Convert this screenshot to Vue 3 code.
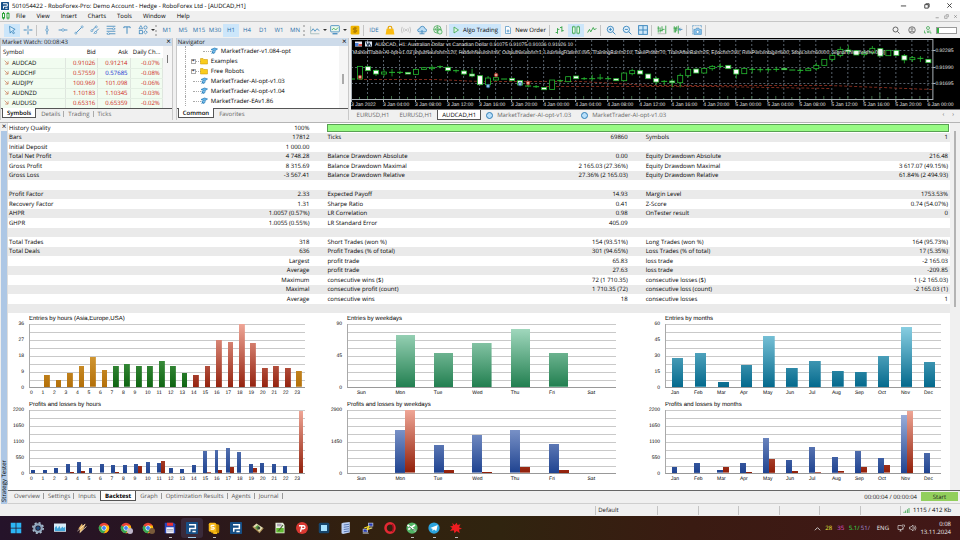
<script setup>
const b = '#3b86bd'
const g = '#3aa64c'
const svgIcons = {
  logo: '<rect width="16" height="16" rx="1" fill="#164f86"/><path d="M4 3.500h8.500v5H5V13M8.500 12.500h4.500" fill="none" stroke="#fff" stroke-width="2"/>',
  cursor: `<path d="M4 2l9 5-4 2 3 4-2 1-3-4-2 3z" fill="#d8ecfb" stroke="${b}" stroke-width="1.3"/>`,
  cross: `<path d="M8 1v5M8 10v5M1 8h5M10 8h5M7 8h2" stroke="${b}" stroke-width="1.5"/>`,
  vline: `<path d="M8 1v14" stroke="${b}" stroke-width="1.4"/><circle cx="8" cy="8" r="2" fill="#fff" stroke="${b}"/>`,
  hline: `<path d="M1 8h14" stroke="${b}" stroke-width="1.4"/><circle cx="8" cy="8" r="2" fill="#fff" stroke="${b}"/>`,
  trend: `<path d="M3 13L13 3" stroke="${b}" stroke-width="1.4"/><circle cx="3" cy="13" r="1.6" fill="#fff" stroke="${b}"/><circle cx="13" cy="3" r="1.6" fill="#fff" stroke="${b}"/>`,
  channel: `<path d="M2 10L10 2M6 14L14 6" stroke="${b}" stroke-width="1.4"/><circle cx="3" cy="9" r="1.6" fill="#fff" stroke="${b}"/><circle cx="10" cy="3" r="1.6" fill="#fff" stroke="${b}"/><circle cx="9" cy="12" r="1.6" fill="#fff" stroke="${b}"/>`,
  fib: `<path d="M1 2h14M1 6h14M1 10h14M1 14h14" stroke="${b}" stroke-width="1.3"/><circle cx="12" cy="6" r="1.6" fill="#fff" stroke="${b}"/><circle cx="4" cy="14" r="1.6" fill="#fff" stroke="${b}"/>`,
  text: `<path d="M3 5V3h10v2M8 3v11" fill="none" stroke="${b}" stroke-width="1.5"/>`,
  shapes: `<path d="M4.500 1l3 5h-6z" fill="none" stroke="${b}" stroke-width="1.2"/><circle cx="12" cy="4" r="2.500" fill="none" stroke="${b}" stroke-width="1.2"/><rect x="2" y="9" width="5" height="5" fill="none" stroke="${b}" stroke-width="1.2"/><path d="M12 9l3 2.500-3 2.500-3-2.500z" fill="none" stroke="${b}" stroke-width="1.2"/>`,
  lines: `<path d="M1 2v12h14" fill="none" stroke="#8aa" /><path d="M2 10l3-4 3 4 3-4 4 3" fill="none" stroke="${b}" stroke-width="1.3"/>`,
  indic: `<rect x="1" y="1" width="14" height="10" rx="1" fill="#e9f7ee" stroke="${b}" stroke-width="1.3"/><path d="M3 8l3-3 3 3 4-4" fill="none" stroke="${g}" stroke-width="1.3"/><path d="M4 14h8" stroke="${b}" stroke-width="2"/>`,
  dollar: '<rect x="1" y="1" width="14" height="14" rx="2" fill="#f0b400"/><path d="M11 5H7q-2 0-2 1.500T7 8h2q2 0 2 1.500T9 11H5M8 3v10" fill="none" stroke="#9a6a00" stroke-width="1.3"/>',
  lock: '<path d="M5 7V5q0-3 3-3t3 3v2" fill="none" stroke="#e3a100" stroke-width="1.800"/><path d="M2.500 6h11L15 15H1z" fill="#fbbc12"/>',
  signal: '<circle cx="8" cy="8" r="1.500" fill="#bbb"/><path d="M5 5q-2 3 0 6M2 3q-3 5 0 10M11 5q2 3 0 6M14 3q3 5 0 10" fill="none" stroke="#bdbdbd" stroke-width="1.3"/>',
  cloud: `<path d="M4 11q-3 0-3-2.500T4 6q1-4 4.500-4T13 6q2.500.5 2.500 2.500T13 11z" fill="#bcdcf3" stroke="${b}" stroke-width="1.3"/><path d="M8 8v6M4 14h8" stroke="${b}" stroke-width="1.4"/>`,
  globe: `<circle cx="7" cy="7" r="6" fill="none" stroke="${g}" stroke-width="1.2"/><circle cx="7" cy="7" r="3" fill="none" stroke="${g}"/><path d="M1 7h12M7 1v12" stroke="${g}"/><circle cx="11" cy="11" r="3.500" fill="#dff5e3" stroke="${g}" stroke-width="1.2"/>`,
  play: `<path d="M4 2l9 6-9 6z" fill="#dff5e3" stroke="${g}" stroke-width="1.600"/>`,
  order: `<path d="M3 1h7l3 3v11H3z" fill="#fff" stroke="${b}" stroke-width="1.3"/><path d="M5 10h6M8 7v6" stroke="${b}" stroke-width="1.500"/>`,
  bars: `<path d="M4 5v9M1 12h3M4 7h3M11 2v9M8 4h3M11 9h3" stroke="${g}" stroke-width="1.500"/>`,
  candles: `<rect x="2.500" y="3" width="4" height="10" fill="#e6f9e8" stroke="${g}" stroke-width="1.300"/><rect x="9.500" y="3" width="4" height="10" fill="#e6f9e8" stroke="${g}" stroke-width="1.300"/><path d="M4.500 1v2M4.500 13v2M11.500 1v2M11.500 13v2" stroke="${g}"/>`,
  zig: `<path d="M1 12l3-5 2 4 4-7 2 4 3-3" fill="none" stroke="${g}" stroke-width="1.500"/>`,
  zin: `<circle cx="7" cy="7" r="5" fill="#e4f2fc" stroke="${b}" stroke-width="1.500"/><path d="M11 11l4 4M4.500 7h5M7 4.500v5" stroke="${b}" stroke-width="1.500"/>`,
  zout: `<circle cx="7" cy="7" r="5" fill="#e4f2fc" stroke="${b}" stroke-width="1.500"/><path d="M11 11l4 4M4.500 7h5" stroke="${b}" stroke-width="1.500"/>`,
  tile: `<rect x="1" y="1" width="14" height="14" fill="#cfe7f8" stroke="${b}" stroke-width="1.500"/><path d="M8 1v14M1 8h14" stroke="${b}" stroke-width="1.500"/>`,
  shift: `<path d="M2 2v10M5 4v8M8 2v8M1 5h3M4 9h5M14 1v13M8 7h4" stroke="${g}" stroke-width="1.400"/><path d="M1 14h13" stroke="#999"/>`,
  scroll: `<path d="M2 2v10M4 4v8M6 2v8M1 5h6M8.500 1v13" stroke="${g}" stroke-width="1.400"/><path d="M15 7h-5M12 4.500L9.500 7l2.500 2.500" fill="none" stroke="${b}" stroke-width="1.400"/>`,
  camera: `<path d="M1 1h14M1 1v14M15 1v4" stroke="${b}" stroke-width="1" stroke-dasharray="2 1"/><path d="M3 7h3l1-2h4l1 2h3v8H3z" fill="#8cc4ec" stroke="${b}"/><circle cx="9" cy="11" r="2.500" fill="#fff" stroke="${b}"/>`,
  search: '<circle cx="7" cy="7" r="5" fill="none" stroke="#444" stroke-width="1.600"/><path d="M11 11l4 4" stroke="#444" stroke-width="1.600"/>',
  person: '<circle cx="8" cy="8" r="6.500" fill="none" stroke="#555" stroke-width="1.600"/><circle cx="8" cy="6" r="2.200" fill="none" stroke="#555" stroke-width="1.200"/><path d="M4 12q4-4 8 0" fill="none" stroke="#555" stroke-width="1.500"/>',
  gem: `<circle cx="8" cy="4" r="3" fill="none" stroke="${g}" stroke-width="1.500"/><path d="M1 9v5h3M6 9l2 5 2-5M12 9v5h3" fill="none" stroke="${g}" stroke-width="1.400"/>`,
  expert: '<path d="M2 5l7-3 6 2-6 4zM4 8q-1 4 4 5l3-4" fill="#63b5ea" stroke="#1e73ad" stroke-width="1.300"/><path d="M3 14l3-4" stroke="#1e73ad" stroke-width="1.300"/>',
  folder: '<path d="M1 3h5l2 2h7v9H1z" fill="#f9cb1d" stroke="#c79300"/>',
  // taskbar
  win: '<path d="M1 1h6.500v6.500H1zM8.500 1H15v6.500H8.500zM1 8.500h6.500V15H1zM8.500 8.500H15V15H8.500z" fill="#2cb5f5"/>',
  gear: '<circle cx="8" cy="8" r="5" fill="none" stroke="#8fa6bd" stroke-width="3"/><circle cx="8" cy="8" r="7" fill="none" stroke="#a9bccd" stroke-width="2" stroke-dasharray="2.750 2.750"/><circle cx="8" cy="8" r="2.500" fill="#1d4d80"/>',
  monitor: '<rect y="2" width="16" height="11" fill="#d9edf9"/><path d="M1 12V8l2-3 2 4 2-4 2 4 2-3 2 2 2-2v6z" fill="#41a5d9"/>',
  bolt: '<path d="M3 9l5-7 1 3 4-3-3 7-5 6V9z" fill="#e6b568"/><path d="M2 12l10-9M5 14l9-8" stroke="#fff0cd"/>',
  chrome: '<circle cx="8" cy="8" r="7" fill="#e84335"/><path d="M8 8L1.900 4.500A7 7 0 0 0 8 15l3-5.200z" fill="#34a853"/><path d="M8 15A7 7 0 0 0 14 4.600H8v3.400l3 2z" fill="#fbbc05"/><circle cx="8" cy="8" r="3.400" fill="#fff"/><circle cx="8" cy="8" r="2.600" fill="#4285f4"/>',
  save: '<path d="M1 1h12l2 2v12H1z" fill="#2944b8"/><rect x="4" y="1" width="8" height="4" fill="#e33"/><rect x="3" y="7" width="10" height="8" fill="#f3f3ff"/><path d="M4 10h8M4 12h8" stroke="#99a"/>',
  yellow: '<rect x="4" y="3" width="11" height="12" rx="2" fill="#c58c00"/><rect x="1" y="1" width="10" height="12" rx="2" fill="#f8ba18"/><path d="M8.500 4.500H5q-1 0-1 1.200T5 7h2q1.300 0 1.300 1.300T7 9.500H3.500" fill="none" stroke="#fff" stroke-width="1.400"/><path d="M7 13h5v3H7z" fill="#f8ba18"/>',
  roll: '<path d="M1 6l5-4 9 6-5 6z" fill="#e4dcb2"/><path d="M4 7l4-3 3 4-4 3z" fill="#599e42"/><path d="M1 6l9 8 5-6" fill="none" stroke="#a88b52" stroke-width="1.500"/><circle cx="9" cy="8" r="2" fill="#394837"/>',
  notepad: '<path d="M2 1h10l2 3v11H2z" fill="#e9f4df"/><path d="M3 8h10v6H3z" fill="#62b932"/><path d="M4 3h6M4 5h6" stroke="#869"/><path d="M6 12l6-8" stroke="#435b2d" stroke-width="1.500"/>',
  pcircle: '<circle cx="8" cy="8" r="8" fill="#d93831"/><path d="M4 5h6q2 0 2 2t-2 2H7M8 5L6 13" fill="none" stroke="#fff" stroke-width="1.700"/>',
  square: '<rect x="1" y="1" width="14" height="14" rx="2" fill="#17456c"/><rect x="4" y="4" width="8" height="8" fill="#a7e2ff"/>',
  server: '<path d="M4 1l9-1v14l-9 2-2-1V2z" fill="#bdd1f4"/><path d="M5 4l7-1M5 7l7-1M5 10l7-1M5 13l7-1" stroke="#5876b0" stroke-width="1.300"/>',
  putty: '<rect x="8" y="1" width="7" height="5" fill="#b9c4d4"/><rect x="9" y="2" width="5" height="3" fill="#2537b5"/><rect x="1" y="9" width="7" height="5" fill="#b9c4d4"/><rect x="2" y="10" width="5" height="3" fill="#2537b5"/><path d="M3 8l6-2-2 4 6-2" fill="none" stroke="#ffe62e" stroke-width="1.500"/><path d="M9 8h5M1 15h8" stroke="#b9c4d4"/>',
  opera: '<ellipse cx="8" cy="8" rx="6" ry="6.300" fill="none" stroke="#e42933" stroke-width="3.400"/><path d="M11 3q3 5 0 10" fill="none" stroke="#a50f20" stroke-width="2"/>',
  greenball: '<circle cx="8" cy="8" r="7.500" fill="#52b565"/><path d="M2 4l11 8M3 10l9-6" stroke="#fff" stroke-width="2.200"/><path d="M4 6q5 6 9 5" stroke="#174f2d" fill="none" stroke-width="1.200"/>',
  telegram: '<circle cx="8" cy="8" r="7.500" fill="#2ba4df"/><path d="M3 8l10-4-2 8-3-2-2 2v-3z" fill="#fff"/>',
  splat: '<path d="M3 1l3 3 3-3 1 3 4-1-2 4 4 2-4 1 1 5-4-3-3 3-1-4-5 1 3-4-3-2 4-1z" fill="#ee1c20"/>',
  net: '<path d="M9 3H2v8h9V8M5 14h4M7 11v3" fill="none" stroke="#ddd" stroke-width="1.300"/><path d="M10 2h5v3q-2.500 3-5 0zM12.500 7v4" fill="none" stroke="#ddd" stroke-width="1.200"/>',
  sound: '<path d="M1 6h3l4-4v12l-4-4H1zM10 5q2 3 0 6M12 3q4 5 0 10" fill="none" stroke="#ddd" stroke-width="1.300"/>'
}
const menus = ['File', 'View', 'Insert', 'Charts', 'Tools', 'Window', 'Help']
const I = (icon, label, on) => ({ t: 'i', icon, label, on })
const S = { t: 's' }
const G = { t: 'g' }
const C = { t: 'c' }
const tools = [
  I('cursor', 'Cursor', true), I('cross', 'Crosshair'), S, I('vline', 'Vertical line'), I('hline', 'Horizontal line'),
  I('trend', 'Trendline'), I('channel', 'Channel'), I('fib', 'Fibonacci'), I('text', 'Text'), I('shapes', 'Shapes'), C, G,
  ...['M1', 'M5', 'M15', 'M30', 'H1', 'H4', 'D1', 'W1', 'MN'].map(x => ({ t: 'x', text: x, on: x === 'H1' })),
  G, I('lines', 'Chart type'), C, I('indic', 'Indicators'), C, I('dollar', 'Symbols'), S, { t: 'x', text: 'IDE' },
  I('lock', 'Market'), I('signal', 'Signals'), I('cloud', 'VPS'), I('globe', 'Community'), S,
  { t: 'w', icon: 'play', text: 'Algo Trading', on: true }, { t: 'w', icon: 'order', text: 'New Order' }, S,
  I('bars', 'Bar chart'), I('candles', 'Candlesticks', true), I('zig', 'Line chart'), S,
  I('zin', 'Zoom in'), I('zout', 'Zoom out'), I('tile', 'Tile windows'), S, I('shift', 'Chart shift'), I('scroll', 'Auto scroll'), S, I('camera', 'Screenshot'), S
]
const quotes = [
  ['AUDCAD', '0.91026', '0.91214', '-0.07%'],
  ['AUDCHF', '0.57559', '0.57685', '-0.08%', true],
  ['AUDJPY', '100.969', '101.098', '-0.06%'],
  ['AUDNZD', '1.10183', '1.10345', '-0.03%'],
  ['AUDUSD', '0.65316', '0.65359', '-0.02%']
]
const nav = [
  { n: 'MarketTrader-v1.084-opt', icon: 'expert', deep: true },
  { n: 'Examples', icon: 'folder', plus: true },
  { n: 'Free Robots', icon: 'folder', plus: true },
  { n: 'MarketTrader-AI-opt-v1.03', icon: 'expert' },
  { n: 'MarketTrader-AI-opt-v1.04', icon: 'expert' },
  { n: 'MarketTrader-EAv1.86', icon: 'expert' }
]
// [kind, body top, body bottom, wick top, wick bottom] in thirds of a pixel
const raw = [
  'd 237', 'h 199 237', 'f 200 212', 'f 211 222 208 228', 'h 216 222 208 230', 'd 217 207 229', 'd 217 212 222', 'f 217 222',
  'h 208 223', 'h 203 208', 'h 202 206 196 212', 'd 200 196 205', 'f 202 211 198 216', 'd 212 208 218', 'f 213 222 209 226', 'f 222 228 206 232',
  'f 227 254', 'h 234 254 228 262', 'h 233 240', 'd 237', 'f 235 241', 'f 242 255', 'd 258 246 262', 'd 260 255 264', 'f 262 269', 'h 240 268',
  'd 242 238 248', 'h 230 245', 'f 228 236', 'd 236 231 240', 'd 236 224 242', 'd 234 222 240', 'd 236 229 240', 'f 236 242', 'h 219 242', 'h 212 221 206 226', 'f 212 222',
  'f 222 236', 'f 235 246 230 254', 'd 244 240 256', 'f 243 248 236 262', 'h 226 248 220 262', 'h 208 227 200 232', 'f 207 219', 'h 205 219',
  'h 199 206 195 212', 'd 199 190 204', 'f 196 206', 'f 208 222 208 236', 'h 205 221', 'd 208 203 220', 'd 209 203 217', 'd 209 203 217', 'd 208 200 215',
  'f 205 209', 'd 210', 'd 211 205 218', 'h 206 212', 'h 196 206 188 212', 'h 178 196', 'h 166 178 160 184', 'h 148 166 140 172', 'f 150 154 136 164',
  'f 152 165', 'h 158 164 150 170', 'h 145 158 138 164', 'f 146 168', 'h 151 167', 'f 151 166', 'f 167 180 162 190', 'h 173 179 168 186', 'd 175 168 186', 'f 178 188'
]
const candles = raw.map((s, i) => {
  const [k, ...v] = s.split(' ')
  const n = v.map(Number)
  const x = 1 + i * 8
  if (k === 'd') return { k, x, y: n[0] / 3, h: 0, a: (n[1] ?? n[0]) / 3, z: (n[2] ?? n[0]) / 3 }
  return { k, x, y: n[0] / 3, h: (n[1] - n[0]) / 3, a: (n[2] ?? n[0]) / 3, z: (n[3] ?? n[1]) / 3 }
})
const hrs = ['00:00', '04:00', '08:00', '12:00', '16:00', '20:00']
const times = Array.from({ length: 19 }, (_, k) => k === 0 ? '3 Jan 2022' : `${3 + Math.floor(k / 6)} Jan ${hrs[k % 6]}`)
const deals = [[9, 77, 'r'], [137, 86, 'b'], [145, 75, 'r'], [169, 84, 'b'], [177, 83, 'r']]

const e = ''
const stats = [
  ['Bars', '17812', 'Ticks', '69860', 'Symbols', '1'],
  ['Initial Deposit', '1 000.00', e, e, e, e],
  ['Total Net Profit', '4 748.28', 'Balance Drawdown Absolute', '0.00', 'Equity Drawdown Absolute', '216.48'],
  ['Gross Profit', '8 315.69', 'Balance Drawdown Maximal', '2 165.03 (27.36%)', 'Equity Drawdown Maximal', '3 617.07 (49.15%)'],
  ['Gross Loss', '-3 567.41', 'Balance Drawdown Relative', '27.36% (2 165.03)', 'Equity Drawdown Relative', '61.84% (2 494.93)'],
  [e, e, e, e, e, e],
  ['Profit Factor', '2.33', 'Expected Payoff', '14.93', 'Margin Level', '1753.53%'],
  ['Recovery Factor', '1.31', 'Sharpe Ratio', '0.41', 'Z-Score', '0.74 (54.07%)'],
  ['AHPR', '1.0057 (0.57%)', 'LR Correlation', '0.98', 'OnTester result', '0'],
  ['GHPR', '1.0055 (0.55%)', 'LR Standard Error', '405.09', e, e],
  [e, e, e, e, e, e],
  ['Total Trades', '318', 'Short Trades (won %)', '154 (93.51%)', 'Long Trades (won %)', '164 (95.73%)'],
  ['Total Deals', '636', 'Profit Trades (% of total)', '301 (94.65%)', 'Loss Trades (% of total)', '17 (5.35%)'],
  [e, 'Largest', 'profit trade', '65.83', 'loss trade', '-2 165.03'],
  [e, 'Average', 'profit trade', '27.63', 'loss trade', '-209.85'],
  [e, 'Maximum', 'consecutive wins ($)', '72 (1 710.35)', 'consecutive losses ($)', '1 (-2 165.03)'],
  [e, 'Maximal', 'consecutive profit (count)', '1 710.35 (72)', 'consecutive loss (count)', '-2 165.03 (1)'],
  [e, 'Average', 'consecutive wins', '18', 'consecutive losses', '1'],
  [e, e, e, e, e, e]
]
const hours = Array.from({ length: 24 }, (_, i) => String(i))
const days = ['Sun', 'Mon', 'Tue', 'Wed', 'Thu', 'Fri', 'Sat']
const months = ['Jan', 'Feb', 'Mar', 'Apr', 'May', 'Jun', 'Jul', 'Aug', 'Sep', 'Oct', 'Nov', 'Dec']
const session = i => i < 7 || i === 23 ? 'asia' : i < 14 ? 'europe' : 'usa'
const one = (labels, vals, tone) => labels.map((l, i) => ({ l, bars: [{ v: vals[i], c: typeof tone === 'string' ? tone : tone(i) }] }))
const two = (labels, p, q) => labels.map((l, i) => ({ l, bars: [{ v: p[i], c: 'gain' }, { v: q[i], c: 'loss' }] }))
const charts = [
  { title: 'Entries by hours (Asia,Europe,USA)', max: 36, ticks: [36, 27, 18, 9, 0], kind: 'hours',
    cols: one(hours, [0, 7, 4, 8, 12, 17, 10, 12, 13, 12, 12, 15, 12, 8, 7, 12, 27, 26, 36, 25, 11, 12, 11, 9], session) },
  { title: 'Entries by weekdays', max: 90, ticks: [90, 45, 0], kind: 'days', cols: one(days, [0, 75, 49, 63, 83, 48, 0], 'day') },
  { title: 'Entries by months', max: 60, ticks: [60, 45, 30, 15, 0], kind: 'months', cols: one(months, [28, 32, 5, 21, 49, 18, 25, 15, 14, 30, 57, 24], 'month') },
  { title: 'Profits and losses by hours', max: 2200, ticks: [2200, 1650, 1100, 550, 0], kind: 'hours pair',
    cols: two(hours, [115, 104, 173, 310, 390, 173, 300, 276, 288, 320, 400, 333, 173, 150, 265, 770, 795, 860, 725, 310, 345, 310, 253, 0],
      [0, 0, 0, 35, 70, 0, 0, 35, 0, 253, 0, 437, 0, 0, 0, 25, 105, 215, 0, 160, 0, 0, 0, 2165]) },
  { title: 'Profits and losses by weekdays', max: 2900, ticks: [2900, 1450, 0], kind: 'days', cols: two(days, [0, 1975, 1275, 1730, 1960, 1335, 0], [0, 2880, 155, 60, 260, 150, 0]) },
  { title: 'Profits and losses by months', max: 2200, ticks: [2200, 1650, 1100, 550, 0], kind: 'months',
    cols: two(months, [220, 345, 92, 357, 1230, 460, 900, 552, 770, 540, 2025, 715], [0, 0, 195, 35, 483, 70, 25, 60, 195, 265, 2165, 10]) }
]
const testerTabs = ['Overview', 'Settings', 'Inputs', 'Backtest', 'Graph', 'Optimization Results', 'Agents', 'Journal']
const apps = ['win', 'gear', 'monitor', 'bolt', 'chrome', 'chrome', 'chrome', 'save', 'logo', 'yellow', 'logo', 'roll', 'notepad', 'pcircle', 'square', 'server', 'putty', 'opera', 'greenball', 'telegram', 'splat']
const running = [7, 9, 18, 19, 20]
</script>

<template>
  <div class="app">
    <header class="titlebar">
      <svg class="ic8" viewBox="0 0 16 16" v-html="svgIcons.logo" />
      <span class="title">501054422 - RoboForex-Pro: Demo Account - Hedge - RoboForex Ltd - [AUDCAD,H1]</span>
      <div class="winbtns">
        <button aria-label="Minimize"><svg viewBox="0 0 8 8"><path d="M1 4.500h6" stroke="#333" /></svg></button>
        <button aria-label="Restore"><svg viewBox="0 0 8 8"><path d="M2 3h4v4H2zM3 2h4v4" fill="none" stroke="#333" /></svg></button>
        <button aria-label="Close"><svg viewBox="0 0 8 8"><path d="M1.500 1.500l5 5M6.500 1.500l-5 5" stroke="#333" /></svg></button>
      </div>
    </header>

    <nav class="menubar">
      <svg class="ic8" viewBox="0 0 16 16"><rect x="1" y="3" width="4" height="9" fill="#fff" stroke="#31a53d" stroke-width="2" /><rect x="10" y="3" width="4" height="9" fill="#fff" stroke="#31a53d" stroke-width="2" /><path d="M3 0v3M3 12v3M12 0v3M12 12v3" stroke="#31a53d" stroke-width="2" /></svg>
      <button v-for="m in menus" :key="m">{{ m }}</button>
      <div class="mdibtns">
        <svg viewBox="0 0 8 8"><path d="M1 6h5" stroke="#777" /></svg>
        <svg viewBox="0 0 8 8"><path d="M1 3h4v4H1zM3 1h4v4" fill="none" stroke="#888" /></svg>
        <svg viewBox="0 0 8 8"><path d="M2 2l4 4M6 2l-4 4" stroke="#777" /></svg>
      </div>
    </nav>

    <div class="toolbar">
      <template v-for="(t, i) in tools" :key="i">
        <i v-if="t.t === 's'" class="sep" />
        <i v-else-if="t.t === 'g'" class="grip" />
        <i v-else-if="t.t === 'c'" class="caret" />
        <button v-else-if="t.t === 'i'" class="tool" :class="{ on: t.on }" :aria-label="t.label"><svg viewBox="0 0 16 16" v-html="svgIcons[t.icon]" /></button>
        <button v-else-if="t.t === 'x'" class="tool tf" :class="{ on: t.on }">{{ t.text }}</button>
        <button v-else class="wide" :class="{ on: t.on }"><svg viewBox="0 0 16 16" v-html="svgIcons[t.icon]" />{{ t.text }}</button>
      </template>
      <div class="right-tools">
        <button class="tool" aria-label="Search"><svg viewBox="0 0 16 16" v-html="svgIcons.search" /></button>
        <button class="tool" aria-label="Account"><svg viewBox="0 0 16 16" v-html="svgIcons.person" /></button>
        <button class="tool" aria-label="Level"><svg viewBox="0 0 16 16" v-html="svgIcons.gem" /></button>
        <span class="level"><i /></span>
      </div>
    </div>

    <div class="dock">
      <section class="panel market">
        <div class="ptitle"><span>Market Watch: 00:08:43</span><button aria-label="Close Market Watch">×</button></div>
        <div class="pbody">
          <table>
            <thead><tr><th>Symbol</th><th>Bid</th><th>Ask</th><th>Daily Ch...</th></tr></thead>
            <tbody>
              <tr v-for="q in quotes" :key="q[0]">
                <td><svg viewBox="0 0 8 8"><path d="M1 1l5 5M6.500 2v4.500H2" fill="none" stroke="#c4673d" /></svg>{{ q[0] }}</td>
                <td>{{ q[1] }}</td><td :class="{ up: q[4] }">{{ q[2] }}</td><td>{{ q[3] }}</td>
              </tr>
            </tbody>
          </table>
          <div class="vscroll"><i class="short" /></div>
        </div>
        <div class="ptabs"><button class="cur">Symbols</button><button>Details</button><button>Trading</button><button>Ticks</button></div>
      </section>

      <section class="panel navigator">
        <div class="ptitle"><span>Navigator</span><button aria-label="Close Navigator">×</button></div>
        <div class="pbody">
          <ul>
            <li v-for="n in nav" :key="n.n" :class="{ deep: n.deep }">
              <span class="branch"><b v-if="n.plus">+</b></span>
              <svg viewBox="0 0 16 16" v-html="svgIcons[n.icon]" />{{ n.n }}
            </li>
          </ul>
          <div class="vscroll mid"><i /></div>
        </div>
        <div class="ptabs"><button class="cur">Common</button><button>Favorites</button></div>
      </section>

      <section class="chartwin">
        <svg class="price" viewBox="0 0 609 71" preserveAspectRatio="xMinYMin meet">
          <g transform="translate(0 -38)">
            <g stroke="#56606a" stroke-width="1" stroke-dasharray="2 2" fill="none">
              <path d="M0 50.500H581M0 67.500H581M0 83.500H581" />
              <path v-for="k in 36" :key="k" :d="`M${k * 16 + .5} 40V99`" />
            </g>
            <path d="M8 79.500H85L130 81.500 H230L300 85.500H480L581 89.500M195 86.500H360L480 88.500" fill="none" stroke="#7c2b1e" stroke-dasharray="3 2" />
            <path v-for="k in 72" :key="'v' + k" :d="`M${k * 8 + .5} 99v${-1 - (k * 7 % 3) - (k === 66 ? 5 : 0)}`" stroke="#3f6b45" />
            <g v-for="(c, i) in candles" :key="'c' + i" stroke="#25bb30" stroke-width=".8">
              <path :d="`M${c.x} ${c.a}V${c.z}`" />
              <path v-if="c.k === 'd'" :d="`M${c.x - 3} ${c.y}h6`" stroke-width="1" />
              <rect v-else :x="c.x - 2.5" :y="c.y" width="5" :height="c.h" :fill="c.k === 'h' ? '#000' : '#fff'" />
            </g>
            <circle v-for="d in deals" :key="d[0]" :cx="d[0]" :cy="d[1]" r="1.800" :fill="d[2] === 'r' ? '#e4a79b' : '#8fbde0'" :stroke="d[2] === 'r' ? '#b3301e' : '#2b6796'" stroke-width=".8" />
            <path d="M.5 99V39.500H581.500V99.500H0" fill="none" stroke="#a9b0b6" />
            <path v-for="k in 19" :key="'t' + k" :d="`M${k * 32 - 31.5} 99v3`" stroke="#a9b0b6" />
            <path d="M581 50.500h3M581 67.500h3M581 83.500h3" stroke="#a9b0b6" />
            <g class="plabels">
              <text v-for="(t, k) in times" :key="t" :x="k * 32" y="105.500">{{ t }}</text>
              <text x="584" y="52">0.92285</text><text x="584" y="69">0.91990</text><text x="584" y="85">0.91695</text>
              <text x="24" y="46">AUDCAD, H1:  Australian Dollar vs Canadian Dollar  0.91075 0.91075 0.91026 0.91026  10</text>
              <text x="2" y="54">MarketTrader-AI-opt-v1.03 [InputNeurons=120; HiddenNeurons=9; OutputNeurons=1; LearningRate=0.095; TrainingBars=210; TakeProfit=70; TrainAfterBars=25; Epochs=200; RiskPercentage=600; StopLoss=60000; SignalThreshold=0.000]</text>
            </g>
            <rect x="4" y="41.500" width="7" height="5" fill="#e7e7f0" /><path d="M4 43h3.500v3H4z" fill="#4b7fd6" /><path d="M7.500 44H11v2H7.500z" fill="#d4564e" />
            <rect x="14" y="41.500" width="7" height="5" fill="#dce7f5" /><path d="M15 42l2 4 1-3 2 3" stroke="#24384f" fill="none" />
          </g>
        </svg>
        <div class="charttabs">
          <button>EURUSD,H1</button><button>EURUSD,H1</button><button class="cur">AUDCAD,H1</button>
          <button class="ea"><i />MarketTrader-AI-opt-v1.03</button><button class="ea"><i />MarketTrader-AI-opt-v1.03</button>
          <span class="arrows"><span>‹</span><span>›</span></span>
        </div>
      </section>
    </div>

    <section class="tester">
      <div class="spine"><button aria-label="Close tester">×</button><span>Strategy Tester</span></div>
      <div class="tmain">
        <div class="report">
          <div class="rcontent">
            <table class="stats">
              <colgroup><col class="w16"><col class="w16"><col class="w17"><col class="w17"><col class="w17"><col></colgroup>
              <tbody>
                <tr><td>History Quality</td><td>100%</td><td colspan="4" class="quality"><div /></td></tr>
                <tr v-for="(r, i) in stats" :key="i"><td v-for="(c, j) in r" :key="j">{{ c }}</td></tr>
              </tbody>
            </table>
            <div class="charts">
              <figure v-for="c in charts" :key="c.title" :class="c.kind">
                <figcaption>{{ c.title }}</figcaption>
                <div class="plotrow">
                  <div class="yaxis"><span v-for="t in c.ticks" :key="t">{{ t }}</span></div>
                  <div class="plot">
                    <div v-for="(col, i) in c.cols" :key="i" class="col">
                      <template v-for="(x, j) in col.bars" :key="j"><i :class="x.c" :style="{ height: x.v / c.max * 100 + '%' }" /></template>
                    </div>
                  </div>
                </div>
                <div class="xaxis"><span v-for="col in c.cols" :key="col.l">{{ col.l }}</span></div>
              </figure>
            </div>
          </div>
          <div class="rscroll"><i /></div>
        </div>
        <div class="ttabs">
          <button v-for="t in testerTabs" :key="t" :class="{ cur: t === 'Backtest' }">{{ t }}</button>
          <span class="clock">00:00:04 / 00:00:04</span>
          <button class="start">Start</button>
        </div>
      </div>
    </section>

    <footer class="status">
      <span class="profile">Default</span>
      <span /><span /><span /><span /><span /><span />
      <span class="conn"><svg viewBox="0 0 16 12"><path d="M1 12V9h2v3zM5 12V6h2v6zM9 12V3h2v9zM13 12V0h2v12z" fill="#35a34a" /></svg>1115 / 412 Kb</span>
    </footer>

    <div class="taskbar">
      <button v-for="(a, i) in apps" :key="i" :aria-label="a" :class="{ active: i === 8, running: running.includes(i) }">
        <svg viewBox="0 0 16 16" v-html="svgIcons[a]" />
        <em v-if="i === 5 || i === 6" :class="{ dark: i === 6 }" />
      </button>
      <div class="tray">
        <svg viewBox="0 0 8 8"><path d="M1 6l3-3 3 3" fill="none" stroke="#ddd" /></svg>
        <b class="y">28</b><b class="m">35</b><b class="gr">5.1/</b><b class="p">51/</b>
        <span class="lang">ENG</span>
        <svg class="net" viewBox="0 0 16 16" v-html="svgIcons.net" /><svg class="net" viewBox="0 0 16 16" v-html="svgIcons.sound" />
        <span class="date"><span>0:08</span><span>13.11.2024</span></span>
      </div>
    </div>
  </div>
</template>

<style>
body { margin: 0; background: #f0f0f0; }
</style>

<style scoped>
* { box-sizing: border-box; }
.app { min-height: 100vh; display: flex; flex-direction: column; background: #f0f0f0; color: #000; font: 6px/8px "Open Sans", "Noto Sans", sans-serif; text-rendering: geometricPrecision; overflow: hidden; }
button { font: inherit; color: inherit; background: none; border: 0; padding: 0; margin: 0; white-space: nowrap; text-rendering: inherit; }
i, em { font-style: normal; }
svg { display: block; flex: none; }
.ic8 { width: 8px; height: 8px; }

.titlebar { display: flex; align-items: center; height: 11px; background: #fff; padding: 0 4px 0 1px; gap: 3px; }
.winbtns { margin-left: auto; display: flex; gap: 15px; padding-right: 2px; }
.winbtns svg { width: 7px; height: 7px; }
.winbtns button { width: 8px; }
.menubar { display: flex; align-items: center; height: 11px; border-bottom: 1px solid #c6c6c6; padding: 0 2px; gap: 11px; }
.menubar .ic8 { margin-right: -5px; }
.mdibtns { margin-left: auto; display: flex; gap: 4px; }
.mdibtns svg { width: 5px; height: 5px; }

.toolbar { display: flex; align-items: center; height: 16px; padding-left: 4px; }
.tool { width: 16px; height: 13px; display: flex; align-items: center; justify-content: center; flex: none; }
.tool svg { width: 10px; height: 10px; }
.tf { color: #1f6ea9; }
.on { background: #cce6fa; }
.wide { display: flex; align-items: center; justify-content: center; gap: 3px; height: 13px; width: 48px; flex: none; }
.wide.on { width: 52px; }
.wide svg { width: 8px; height: 8px; }
.sep { width: 3px; height: 11px; flex: none; border-left: 1px solid #c4c4c4; }
.grip { width: 4px; height: 11px; flex: none; border-left: 2px dotted #bdbdbd; }
.caret { width: 4px; flex: none; border: 2px solid transparent; border-top-color: #333; border-bottom: 0; }
.right-tools { margin-left: auto; display: flex; align-items: center; padding-right: 3px; }
.right-tools .tool svg { width: 8px; height: 8px; }
.level { width: 21px; height: 7px; border: 1px solid #999; background: #fff; }
.level i { display: block; width: 2px; height: 5px; background: #2fae3d; }

.dock { display: flex; height: 82px; gap: 2px; }
.panel { display: flex; flex-direction: column; border: 1px solid #c9c9c9; border-width: 0 1px; }
.market { flex: 0 0 18%; }
.navigator { flex: 0 0 18%; margin-left: 1px; }
.ptitle { display: flex; justify-content: space-between; align-items: center; height: 8px; flex: none; background: #cddbea; padding: 0 1px; color: #222; }
.ptitle button { font-size: 8px; line-height: 8px; color: #000; }
.pbody { display: flex; flex: 1; min-height: 0; overflow: hidden; background: #fff; border-bottom: 1px solid #555; }
.pbody table { flex: 1; border-collapse: collapse; table-layout: fixed; align-self: flex-start; }
.pbody th { font-weight: normal; text-align: right; padding: 0 2px; height: 12px; }
.pbody th:first-child, .pbody td:first-child { text-align: left; width: 40%; color: #000; }
.pbody th { width: 20%; white-space: nowrap; }
.pbody td { height: 10px; padding: 0 2px; text-align: right; color: #cf2618; background: #f1fcf0; border-right: 1px solid #dfe6df; border-bottom: 1px solid #e3efe3; line-height: 8px; }
.pbody td svg { width: 5px; height: 5px; display: inline-block; margin: 0 3px 0 1px; }
.pbody td.up { color: #1024cf; }
.vscroll { width: 9px; flex: none; background: #f5f5f5; display: flex; justify-content: center; }
.vscroll i { width: 1px; height: 8px; margin-top: 9px; background: #777; }
.vscroll.mid i { margin-top: 28px; height: 10px; width: 2px; background: #aaa; }
.ptabs { display: flex; height: 11px; flex: none; color: #666; padding-left: 1px; }
.ptabs button { padding: 0 4px; height: 9px; position: relative; }
.ptabs button:not(.cur):not(:last-child)::after { content: ""; position: absolute; right: 0; top: 2px; height: 6px; border-right: 1px solid #aaa; }
.ptabs .cur { background: #fff; border: 1px solid #555; border-top: 0; color: #000; font-weight: 600; height: 10px; margin: -1px 1px 0 0; }
ul { list-style: none; margin: 0; padding: 0 0 0 8px; flex: 1; }
li { display: flex; align-items: center; height: 10px; border-left: 1px dotted #aaa; white-space: nowrap; }
li svg { width: 8px; height: 8px; margin-right: 3px; }
li .branch { width: 15px; height: 10px; display: flex; align-items: center; margin-right: -1px; }
li .branch::after { content: ""; flex: 1; border-top: 1px dotted #aaa; }
li .branch b { width: 5px; height: 5px; border: 1px solid #aaa; font-size: 5px; line-height: 3px; margin-left: 5px; text-align: center; font-weight: 400; }
li:not(.deep) .branch:not(:has(b))::after { margin-left: 7px; }
li.deep .branch { width: 25px; }
li.deep .branch::after { margin-left: 17px; }

.chartwin { flex: 1; min-width: 0; display: flex; flex-direction: column; }
.price { width: 100%; background: #000; border-bottom: 1px solid #777; white-space: pre; }
.plabels { fill: #e8e8e8; font: 5px "Liberation Sans", sans-serif; }
.charttabs { display: flex; flex: 1; color: #666; align-items: flex-start; padding-left: 1px; }
.charttabs button { height: 10px; padding: 0 5px; }
.charttabs .cur { border: 1px solid #555; border-top: 0; background: #fff; color: #000; padding: 0 4px; }
.charttabs .ea { display: flex; align-items: center; gap: 4px; padding: 0 5px; }
.ea i { width: 7px; height: 7px; border-radius: 50%; border: 1px solid #317eb6; background: #b9e0fb; }
.charttabs .arrows { margin-left: auto; display: flex; gap: 8px; padding-right: 6px; }

.tester { display: flex; flex: 1; border-top: 1px solid #b5b5b5; margin-top: 2px; }
.spine { width: 8px; flex: none; display: flex; flex-direction: column; justify-content: space-between; background: #adc7e5; border-right: 1px solid #ddd; border-left: 1px solid #eee; }
.spine button { background: #f0f0f0; font-size: 8px; line-height: 8px; color: #000; }
.spine span { writing-mode: vertical-rl; transform: rotate(180deg); line-height: 6px; padding: 2px 0 0; }
.tmain { flex: 1; min-width: 0; display: flex; flex-direction: column; }
.report { flex: 1; display: flex; background: #fff; border-bottom: 1px solid #666; }
.rcontent { flex: 1; min-width: 0; }
.rscroll { width: 10px; background: #f0f0f0; display: flex; justify-content: center; padding-top: 8px; }
.rscroll i { width: 2px; height: 176px; background: #b3b3b3; }
.stats { width: 100%; height: 190px; border-collapse: collapse; table-layout: fixed; }
.w16 { width: 16%; }
.w17 { width: 17%; }
.stats td { height: 9px; padding: 0 0 0 1px; line-height: 8px; white-space: nowrap; }
.stats td:nth-child(even) { text-align: right; }
.stats td:nth-child(3) { padding-left: 18px; }
.stats td:nth-child(4) { padding-right: 2px; }
.stats td:nth-child(5) { padding-left: 16px; }
.stats td:nth-child(6) { padding-right: 2px; }
.stats tr:nth-child(even) { background: #eaeaea; }
.quality div { height: 8px; background: #98fb84; border: 1px solid #58a052; margin-right: 1px; }
.charts { display: grid; grid-template-columns: repeat(3, 1fr); row-gap: 5px; padding-top: 2px; }
figure { margin: 0; padding-right: 17px; font: 5px/6px "Liberation Sans", sans-serif; }
.days { padding-right: 20px; padding-left: 4px; }
.months { padding-right: 9px; padding-left: 8px; }
figcaption { font-size: 6px; line-height: 8px; padding-left: 21px; }
.plotrow { display: flex; height: 64px; margin-top: 1px; }
.yaxis { width: 21px; flex: none; display: flex; flex-direction: column; justify-content: space-between; align-items: flex-end; padding-right: 5px; margin: -3px 0; }
.plot { flex: 1; display: flex; border-left: 1px solid #aaa; border-bottom: 1px solid #999; background: repeating-linear-gradient(#c9c9c9 0 1px, transparent 1px 8px); }
.col { flex: 1; display: flex; align-items: flex-end; min-width: 0; justify-content: center; }
.col i { width: 50%; background-size: 100% 63px; background-position: bottom; }
.col i + i, .col i:has(+ i) { width: 26%; }
.pair .col { padding-right: 1px; }
.pair .col i + i, .pair .col i:has(+ i) { width: 38%; }
.asia { background-image: linear-gradient(#f0c060, #b36f08); }
.europe { background-image: linear-gradient(#72c072, #0f6512); }
.usa { background-image: linear-gradient(#efa596, #94230f); }
.day { background-image: linear-gradient(#abdfc6, #227f50); }
.month { background-image: linear-gradient(#8fd3e6, #04698c); }
.gain { background-image: linear-gradient(#a3b6e0, #1f4390); }
.loss { background-image: linear-gradient(#f0a797, #911f09); }
.xaxis { display: flex; margin-left: 21px; padding-top: 2px; }
.xaxis span { flex: 1 1 0; min-width: 0; padding-left: 10px; }
.hours .xaxis span { padding-left: 1px; }
.months .xaxis span { padding-left: 6px; }

.ttabs { display: flex; height: 13px; align-items: flex-start; color: #555; border-bottom: 1px solid #cfcfcf; padding: 0 2px; }
.ttabs button { padding: 1px 4px 0; height: 9px; position: relative; }
.ttabs button:not(.cur):not(.start):not(:nth-child(3))::after { content: ""; position: absolute; right: 0; top: 2px; height: 6px; border-right: 1px solid #999; }
.ttabs .cur { border: 1px solid #555; border-top: 0; background: #fff; color: #000; font-weight: 700; height: 10px; }
.ttabs .clock { margin-left: auto; padding: 2px 4px 0; color: #222; }
.ttabs .start { background: #92cf5c; width: 37px; height: 9px; margin-top: 1px; color: #222; padding: 0; }

.status { display: flex; align-items: center; height: 12px; padding-left: 62%; }
.status span { flex: 1; border-left: 1px solid #c4c4c4; height: 9px; padding-left: 2px; }
.status .profile { flex: 0 0 62px; color: #222; }
.status span:empty { flex: 1 1 0; }
.status .conn { flex: 0 0 60px; display: flex; align-items: center; gap: 3px; }
.conn svg { width: 7px; height: 5px; }

.taskbar { display: flex; align-items: center; height: 24px; padding: 0 9px 0 5px; background: linear-gradient(90deg, #25132a 0, #29151f 18%, #32200f 36%, #30240f 52%, #3a1b12 72%, #421717 100%); color: #eee; }
.taskbar button { width: 22px; height: 20px; display: flex; align-items: center; justify-content: center; position: relative; flex: none; border-radius: 3px; }
.taskbar button svg { width: 12px; height: 12px; }
.taskbar .active { background: #3a2a3a; }
.taskbar .active::after, .taskbar .running::after { content: ""; position: absolute; bottom: 0; width: 3px; height: 1px; background: #bbb; }
.taskbar .active::after { width: 8px; background: #9cc8ea; }
.taskbar em { position: absolute; right: 4px; bottom: 4px; width: 6px; height: 6px; border-radius: 50%; background: #bfb6c9; }
.taskbar em.dark { background: #7a5a3a; }
.tray { margin-left: auto; display: flex; align-items: center; gap: 4px; }
.tray > svg { width: 7px; height: 7px; }
.tray .net { width: 8px; height: 8px; }
.tray b { font-weight: 400; width: 8px; text-align: center; }
.y { color: #e8e53b; }
.m { color: #e455d3; }
.gr { color: #35e052; }
.p { color: #a991dd; }
.lang { padding: 0 4px; }
.date { display: flex; flex-direction: column; align-items: flex-end; width: 30px; }
</style>
